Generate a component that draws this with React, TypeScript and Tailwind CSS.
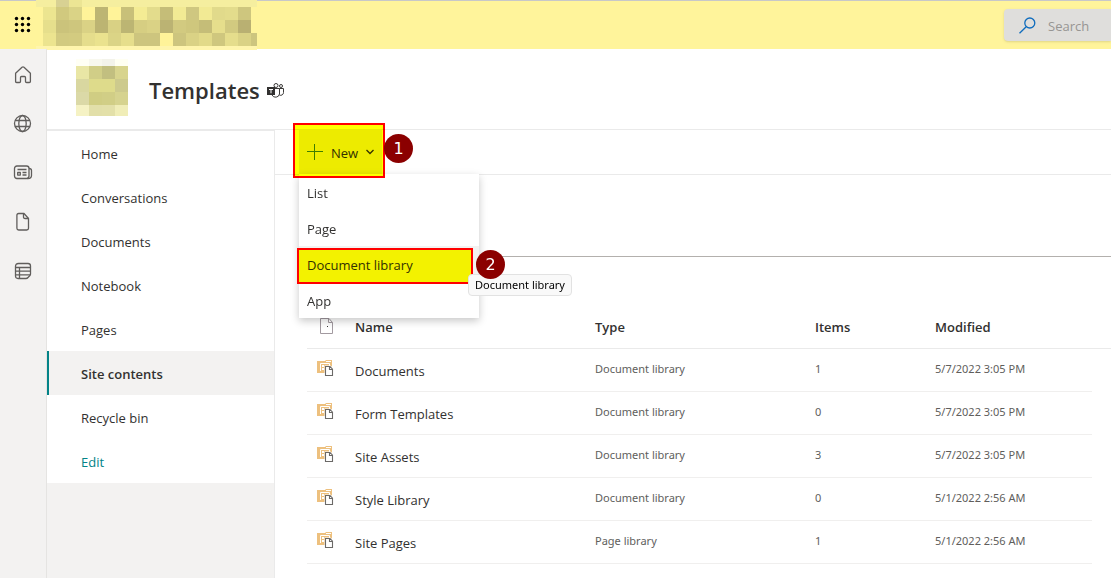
import React from "react";

type Cell = [x: number, y: number, w: number, h: number, fill: string];

function mosaicRow(y: number, h: number, startX: number, colors: string[]): Cell[] {
  return colors.map((c, i) => [startX + i * 13, y, 13, h, c] as Cell);
}

const bannerCells: Cell[] = [
  [0, 0, 221, 7, "#f5ee9f"],
  [20, 0, 13, 7, "#d8d193"],
  [33, 0, 13, 7, "#ece594"],
  [0, 46, 221, 4, "#fff5ad"],
  ...mosaicRow(7, 13, 7, ["#ece590", "#d1c97e", "#dad386", "#fff399", "#bdb573", "#fff399", "#c8c079", "#f4ec94", "#e3dc8c", "#c5bd78", "#f2ea94", "#cfc780", "#f2ea94", "#e1da8b", "#e3dc8c", "#cec67e"]),
  ...mosaicRow(20, 13, 7, ["#e6df8c", "#cbc37b", "#cec67d", "#dad285", "#bcb472", "#d9d184", "#bcb573", "#d6ce82", "#dad285", "#bbb373", "#d2ca80", "#cfc77d", "#c5bd78", "#e6de8c", "#d2ca80", "#b9b072"]),
  ...mosaicRow(33, 13, 7, ["#ece48f", "#d2ca80", "#d3cb80", "#e5dd8c", "#eae28e", "#dbd486", "#e6de8c", "#cdc57e", "#cdc57e", "#fff399", "#cdc57e", "#dad285", "#e2da89", "#cfc77e", "#e5dd8c", "#dad285", "#cdc57e"]),
];

const logoCells: Cell[] = [
  ...mosaicRow(0, 7, 0, ["#fffff4", "#f8f8ee", "#f3f3ea", "#fffff2"]),
  ...mosaicRow(7, 13, 0, ["#e9e6a5", "#d1ce87", "#c2bf80", "#d8d48e"]),
  ...mosaicRow(20, 13, 0, ["#d9d7a0", "#dedb8b", "#dedb8b", "#cdca8d"]),
  ...mosaicRow(33, 13, 0, ["#dbd9a7", "#d0cd83", "#d1ce86", "#d6d38f"]),
  ...mosaicRow(46, 11, 0, ["#f5f2c4", "#e2dfa9", "#e3e0a9", "#f0edb7"]),
];

function Mosaic({ cells, w, h, label, className }: { cells: Cell[]; w: number; h: number; label: string; className?: string }) {
  return (
    <svg width={w} height={h} viewBox={`0 0 ${w} ${h}`} shapeRendering="crispEdges" role="img" aria-label={label} className={className}>
      {cells.map(([x, y, cw, ch, fill], i) => (
        <rect key={i} x={x} y={y} width={cw} height={ch} fill={fill} />
      ))}
    </svg>
  );
}

const railIcons: { label: string; art: React.ReactNode }[] = [
  {
    label: "Home",
    art: <path d="M2.6 8.3 L9 2.3 Q10 1.5 11 2.3 L17.4 8.3 V16.4 Q17.4 17.5 16.3 17.5 H13.6 Q12.5 17.5 12.5 16.4 V12.5 Q12.5 11.5 11.5 11.5 H8.5 Q7.5 11.5 7.5 12.5 V16.4 Q7.5 17.5 6.4 17.5 H3.7 Q2.6 17.5 2.6 16.4 Z" />,
  },
  {
    label: "Global navigation",
    art: (
      <>
        <circle cx="9.5" cy="9.5" r="8" />
        <ellipse cx="9.5" cy="9.5" rx="3.7" ry="8" />
        <path d="M2 6.5 H17 M2 12.5 H17" />
      </>
    ),
  },
  {
    label: "News",
    art: (
      <>
        <rect x="1.5" y="3" width="14.5" height="12.5" rx="2.4" />
        <path d="M16 5.5 Q18.5 5.5 18.5 7.5 V12.5 Q18.5 15.5 15 15.5 H14 M4.5 6.5 H13.5 M9.5 9.5 H13.5 M9.5 12 H13.5" />
        <rect x="4.7" y="9.5" width="2.6" height="2.6" />
      </>
    ),
  },
  {
    label: "Files",
    art: (
      <>
        <path d="M11 1.5 H5.7 Q3.9 1.5 3.9 3.3 V16.2 Q3.9 18 5.7 18 H13.7 Q15.5 18 15.5 16.2 V6.5 Z" />
        <path d="M10.5 1.5 V4.9 Q10.5 6.5 12.1 6.5 H15.5" />
      </>
    ),
  },
  {
    label: "Lists",
    art: (
      <>
        <path d="M5.5 2.5 H15 Q17.5 2.5 17.5 5 V13 Q17.5 14 16.7 14.8 L15 16.5 Q14.2 17.5 13 17.5 H5 Q2.5 17.5 2.5 15 V5.5 Q2.5 2.5 5.5 2.5 Z" />
        <path d="M2.7 6.5 H17.3 M2.7 10.2 H17.3 M2.7 13.8 H17 M6.5 6.5 V17.3" />
      </>
    ),
  },
];

const navItems = ["Home", "Conversations", "Documents", "Notebook", "Pages", "Site contents", "Recycle bin", "Edit"];
const menuItems = ["List", "Page", "Document library", "App"];

const rows = [
  { name: "Documents", type: "Document library", items: 1, modified: "5/7/2022 3:05 PM" },
  { name: "Form Templates", type: "Document library", items: 0, modified: "5/7/2022 3:05 PM" },
  { name: "Site Assets", type: "Document library", items: 3, modified: "5/7/2022 3:05 PM" },
  { name: "Style Library", type: "Document library", items: 0, modified: "5/1/2022 2:56 AM" },
  { name: "Site Pages", type: "Page library", items: 1, modified: "5/1/2022 2:56 AM" },
];

function LibraryIcon() {
  return (
    <svg width="18" height="18" viewBox="0 0 18 18" aria-hidden="true">
      <path d="M0 2 H8 L9 1 H15 V14 H0 Z" fill="#edc07e" />
      <path d="M9 2.5 H14" stroke="#fff" />
      <path d="M3.5 12 V4.5 H12.5 V7" stroke="#fff" fill="none" />
      <rect x="5" y="6" width="2" height="2" fill="#fff" />
      <rect x="5" y="9" width="2" height="2" fill="#fff" />
      <path d="M8 7.5 H11" stroke="#fff" />
      <path d="M7.5 6.5 H13.5 L17.5 10 V17.5 H7.5 Z" fill="#fff" />
      <path d="M8.5 7.5 H13 L15.5 10.2 V16.5 H8.5 Z M12.5 7.5 V10.5 H15.5" fill="#fff" stroke="#6b6967" strokeWidth="1.1" />
    </svg>
  );
}

function TeamsIcon() {
  return (
    <svg width="17" height="17" viewBox="0 0 17 17" fill="none" stroke="#3b3a39" aria-hidden="true">
      <circle cx="9" cy="3.5" r="2" />
      <circle cx="14" cy="4" r="1.5" />
      <path d="M8 6.5 H12.5 V12 A4 4 0 0 1 5 13 M12.5 6.5 H16.5 V10.5 A2.8 2.8 0 0 1 12.4 13" />
      <rect x="0" y="5" width="8" height="8" fill="#323130" stroke="none" />
      <path d="M2 7.5 H6 M4 7.5 V11.3" stroke="#fff" />
    </svg>
  );
}

function StepBadge({ n, className }: { n: number; className: string }) {
  return (
    <span className={`absolute z-30 flex size-[29px] items-center justify-center rounded-full bg-[#8b0000] font-['DejaVu_Sans',sans-serif] text-base text-white ${className}`}>
      {n}
    </span>
  );
}

export default function App() {
  return (
    <div className="flex min-h-screen flex-col overflow-x-hidden bg-white font-['Open_Sans','Noto_Sans',sans-serif] text-[13px] leading-5 text-[#323130]">
      <header className="flex h-[49px] shrink-0 border-t border-[#c8c8c8] bg-[#fff49b]">
        <button aria-label="App launcher" className="flex w-9 items-center justify-end pr-[5px] pb-0.5">
          <svg width="17" height="17" viewBox="0 0 17 17" aria-hidden="true">
            {[2.5, 8.5, 14.5].map((y) => [2.5, 8.5, 14.5].map((x) => <circle key={`${x}-${y}`} cx={x} cy={y} r="1.7" />))}
          </svg>
        </button>
        <Mosaic cells={bannerCells} w={221} h={50} label="Organization name" className="-mt-px shrink-0" />
        <label className="mt-2 ml-auto flex h-8 w-[107px] shrink-0 items-center gap-3 rounded-l bg-[#dfdedc] pl-[15px] shadow-sm">
          <svg width="17" height="17" viewBox="0 0 17 17" fill="none" stroke="#0f6cbd" strokeWidth="1.3" aria-hidden="true" className="shrink-0">
            <circle cx="10.8" cy="6" r="5" />
            <path d="M7.2 9.7 L0.5 16.3" />
          </svg>
          <input type="search" aria-label="Search" placeholder="Search" className="w-full min-w-0 bg-transparent pt-0.5 outline-none placeholder:text-[#979593]" />
        </label>
      </header>

      <div className="flex grow">
        <nav aria-label="App bar" className="flex w-[47px] shrink-0 flex-col items-center gap-[29px] border-r border-[#e5e4e2] bg-[#f3f2f1] pt-4">
          {railIcons.map(({ label, art }) => (
            <a key={label} href="#" aria-label={label}>
              <svg width="20" height="20" viewBox="0 0 20 20" fill="none" stroke="#605e5c" strokeWidth="1.3" strokeLinejoin="round" aria-hidden="true">
                {art}
              </svg>
            </a>
          ))}
        </nav>

        <div className="flex min-w-0 grow flex-col">
          <div className="flex h-20 shrink-0 items-start pt-2.5 pl-[29px]">
            <Mosaic cells={logoCells} w={52} h={57} label="Site logo" />
            <div className="mt-[15px] ml-[21px] flex items-center gap-[7px]">
              <h1 className="text-[22px] leading-8 font-semibold">Templates</h1>
              <TeamsIcon />
            </div>
          </div>

          <div className="flex grow">
            <aside className="w-[228px] shrink-0 border-t-2 border-r border-[#eaeaea] bg-[#f3f2f1]">
              <nav aria-label="Site" className="bg-white">
                {navItems.map((item) => (
                  <a
                    key={item}
                    href="#"
                    aria-current={item === "Site contents" ? "page" : undefined}
                    className={`flex h-11 items-center border-l-2 pt-0.5 pl-8 ${
                      item === "Site contents" ? "border-[#038387] bg-[#f3f2f1] font-semibold" : item === "Edit" ? "border-transparent text-[#038387]" : "border-transparent"
                    }`}
                  >
                    {item}
                  </a>
                ))}
              </nav>
            </aside>

            <main className="min-w-0 grow">
              <div className="flex h-[46px] border-y border-[#eaeaea] pl-6">
                <div className="relative">
                  <button aria-haspopup="menu" aria-expanded="true" className="flex h-11 w-[83px] items-center bg-[#edebe9] pl-2">
                    <svg width="16" height="16" viewBox="0 0 16 16" stroke="#3f7d20" aria-hidden="true">
                      <path d="M7.5 0 V16 M0 7.5 H16" />
                    </svg>
                    <span className="ml-2 pt-0.5">New</span>
                    <svg width="10" height="6" viewBox="0 0 10 6" fill="none" stroke="#323130" strokeWidth="1.3" aria-hidden="true" className="ml-[7px]">
                      <path d="M1.5 1 L5 4.5 L8.5 1" />
                    </svg>
                  </button>
                  <div role="menu" className="absolute top-11 left-0 z-10 w-[180px] bg-white shadow-[0_3px_8px_rgba(0,0,0,0.22)]">
                    {menuItems.map((item) => (
                      <div key={item} className={`relative h-9 ${item === "Document library" ? "bg-[#f3f2f1]" : ""}`}>
                        <button role="menuitem" className="flex h-full w-full items-center pt-0.5 pl-2">
                          {item}
                        </button>
                        {item === "Document library" && (
                          <>
                            <span className="absolute top-0.5 -left-0.5 h-9 w-44 bg-[#ff0] mix-blend-multiply" />
                            <span className="absolute top-0.5 -left-0.5 z-20 h-9 w-44 border-2 border-[#f00]" />
                            <span role="tooltip" className="absolute top-7 left-[169px] z-20 rounded-sm border border-[#e2e2e2] bg-[#f9f9f9] px-1.5 font-['Noto_Sans',sans-serif] text-[11px] whitespace-nowrap text-black">
                              Document library
                            </span>
                            <StepBadge n={2} className="top-1 left-[177px]" />
                          </>
                        )}
                      </div>
                    ))}
                  </div>
                  <span className="absolute -top-[7px] -right-[3px] -bottom-1 -left-1.5 z-20 border-2 border-[#f00] bg-[#ff0] mix-blend-multiply" />
                  <StepBadge n={1} className="top-1 left-[85px]" />
                </div>
              </div>

              <div className="ml-8 h-[82px] border-b border-[#b3b0ad]" />

              <div className="pt-12 pl-8">
                <table className="w-full table-fixed border-separate border-spacing-0 text-left">
                  <colgroup>
                    <col className="w-12" />
                    <col className="w-60" />
                    <col className="w-[220px]" />
                    <col className="w-[120px]" />
                    <col />
                    <col className="w-[19px]" />
                  </colgroup>
                  <thead>
                    <tr className="h-11 *:border-b *:border-[#eaeaea] *:p-0 *:font-semibold">
                      <th aria-label="Kind">
                        <svg width="14" height="17" viewBox="0 0 14 17" fill="none" stroke="#a29aa0" aria-hidden="true" className="ml-[13px]">
                          <path d="M0.5 0.5 H9 L12.5 4.5 V15.5 H0.5 Z M8.5 0.5 V4.5 H12.5" />
                          <rect x="7" y="8" width="1" height="1" fill="#323130" stroke="none" />
                        </svg>
                      </th>
                      <th>Name</th>
                      <th>Type</th>
                      <th>Items</th>
                      <th>Modified</th>
                      <th aria-hidden="true" />
                    </tr>
                  </thead>
                  <tbody>
                    {rows.map((r) => (
                      <tr
                        key={r.name}
                        className="h-[43px] *:border-b *:border-[#f0efee] *:p-0 *:pb-0.5 *:font-['Noto_Sans',sans-serif] *:text-[11px] *:text-[#605e5c] *:last:border-b-0"
                      >
                        <td>
                          <span className="block pb-0.5 pl-2.5">
                            <LibraryIcon />
                          </span>
                        </td>
                        <td>
                          <a href="#" className="block pt-1 font-['Open_Sans',sans-serif] text-[13px] text-[#323130]">
                            {r.name}
                          </a>
                        </td>
                        <td>{r.type}</td>
                        <td>{r.items}</td>
                        <td>{r.modified}</td>
                        <td />
                      </tr>
                    ))}
                  </tbody>
                </table>
              </div>
            </main>
          </div>
        </div>
      </div>
    </div>
  );
}
